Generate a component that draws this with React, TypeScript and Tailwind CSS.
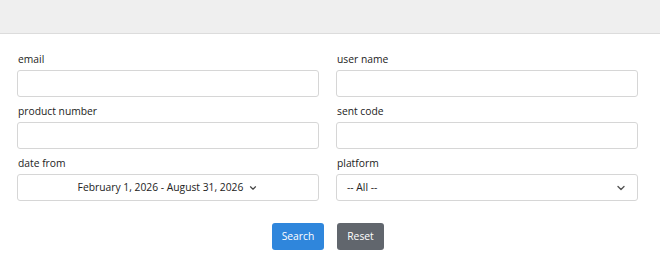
import React from 'react'

const fields = [
  { left: 'email', right: 'user name' },
  { left: 'product number', right: 'sent code' },
]

function Chevron({ className }: { className?: string }) {
  return (
    <svg className={className} viewBox="0 0 12 12" fill="none" stroke="currentColor" strokeWidth={1.4}>
      <path strokeLinecap="round" strokeLinejoin="round" d="M3 4.5l3 3 3-3" />
    </svg>
  )
}

function Label({ children }: { children: React.ReactNode }) {
  return <label className="block h-[14px] leading-[14px] text-[10.3px] text-[#222] mb-[4px] pl-[1px]">{children}</label>
}

export default function App() {
  return (
    <div className="w-[660px] h-[260px] bg-white font-['Open_Sans',sans-serif] overflow-hidden">
      {/* top bar */}
      <div className="h-[34px] bg-[#efefef] border-b border-[#dcdcdc]" />

      <div className="pl-[17px] pr-[22px] pt-[18px]">
        <div className="grid grid-cols-2 gap-x-[17px] gap-y-[7px]">
          {fields.map((f, i) => (
            <React.Fragment key={i}>
              <div>
                <Label>{f.left}</Label>
                <input className="w-full h-[27px] border border-[#d6d6d6] rounded-[3px] bg-white outline-none" />
              </div>
              <div>
                <Label>{f.right}</Label>
                <input className="w-full h-[27px] border border-[#d6d6d6] rounded-[3px] bg-white outline-none" />
              </div>
            </React.Fragment>
          ))}

          <div>
            <Label>date from</Label>
            <div className="h-[27px] border border-[#d6d6d6] rounded-[3px] flex items-center justify-center gap-[5px] text-[10.3px] text-[#222]">
              <span>February 1, 2026 - August 31, 2026</span>
              <Chevron className="w-[10px] h-[10px] text-[#444]" />
            </div>
          </div>
          <div>
            <Label>platform</Label>
            <div className="h-[27px] border border-[#d6d6d6] rounded-[3px] flex items-center justify-between pl-[10px] pr-[10px] text-[10.3px] text-[#222]">
              <span>-- All --</span>
              <Chevron className="w-[12px] h-[12px] text-[#555]" />
            </div>
          </div>
        </div>

        <div className="flex justify-center gap-[13px] mt-[22px] pl-[1px]">
          <button className="h-[27px] w-[52px] rounded-[3px] bg-[#2f86dc] text-white text-[10.3px] font-medium">Search</button>
          <button className="h-[27px] w-[47px] rounded-[3px] bg-[#61666d] text-white text-[10.3px] font-medium">Reset</button>
        </div>
      </div>
    </div>
  )
}
